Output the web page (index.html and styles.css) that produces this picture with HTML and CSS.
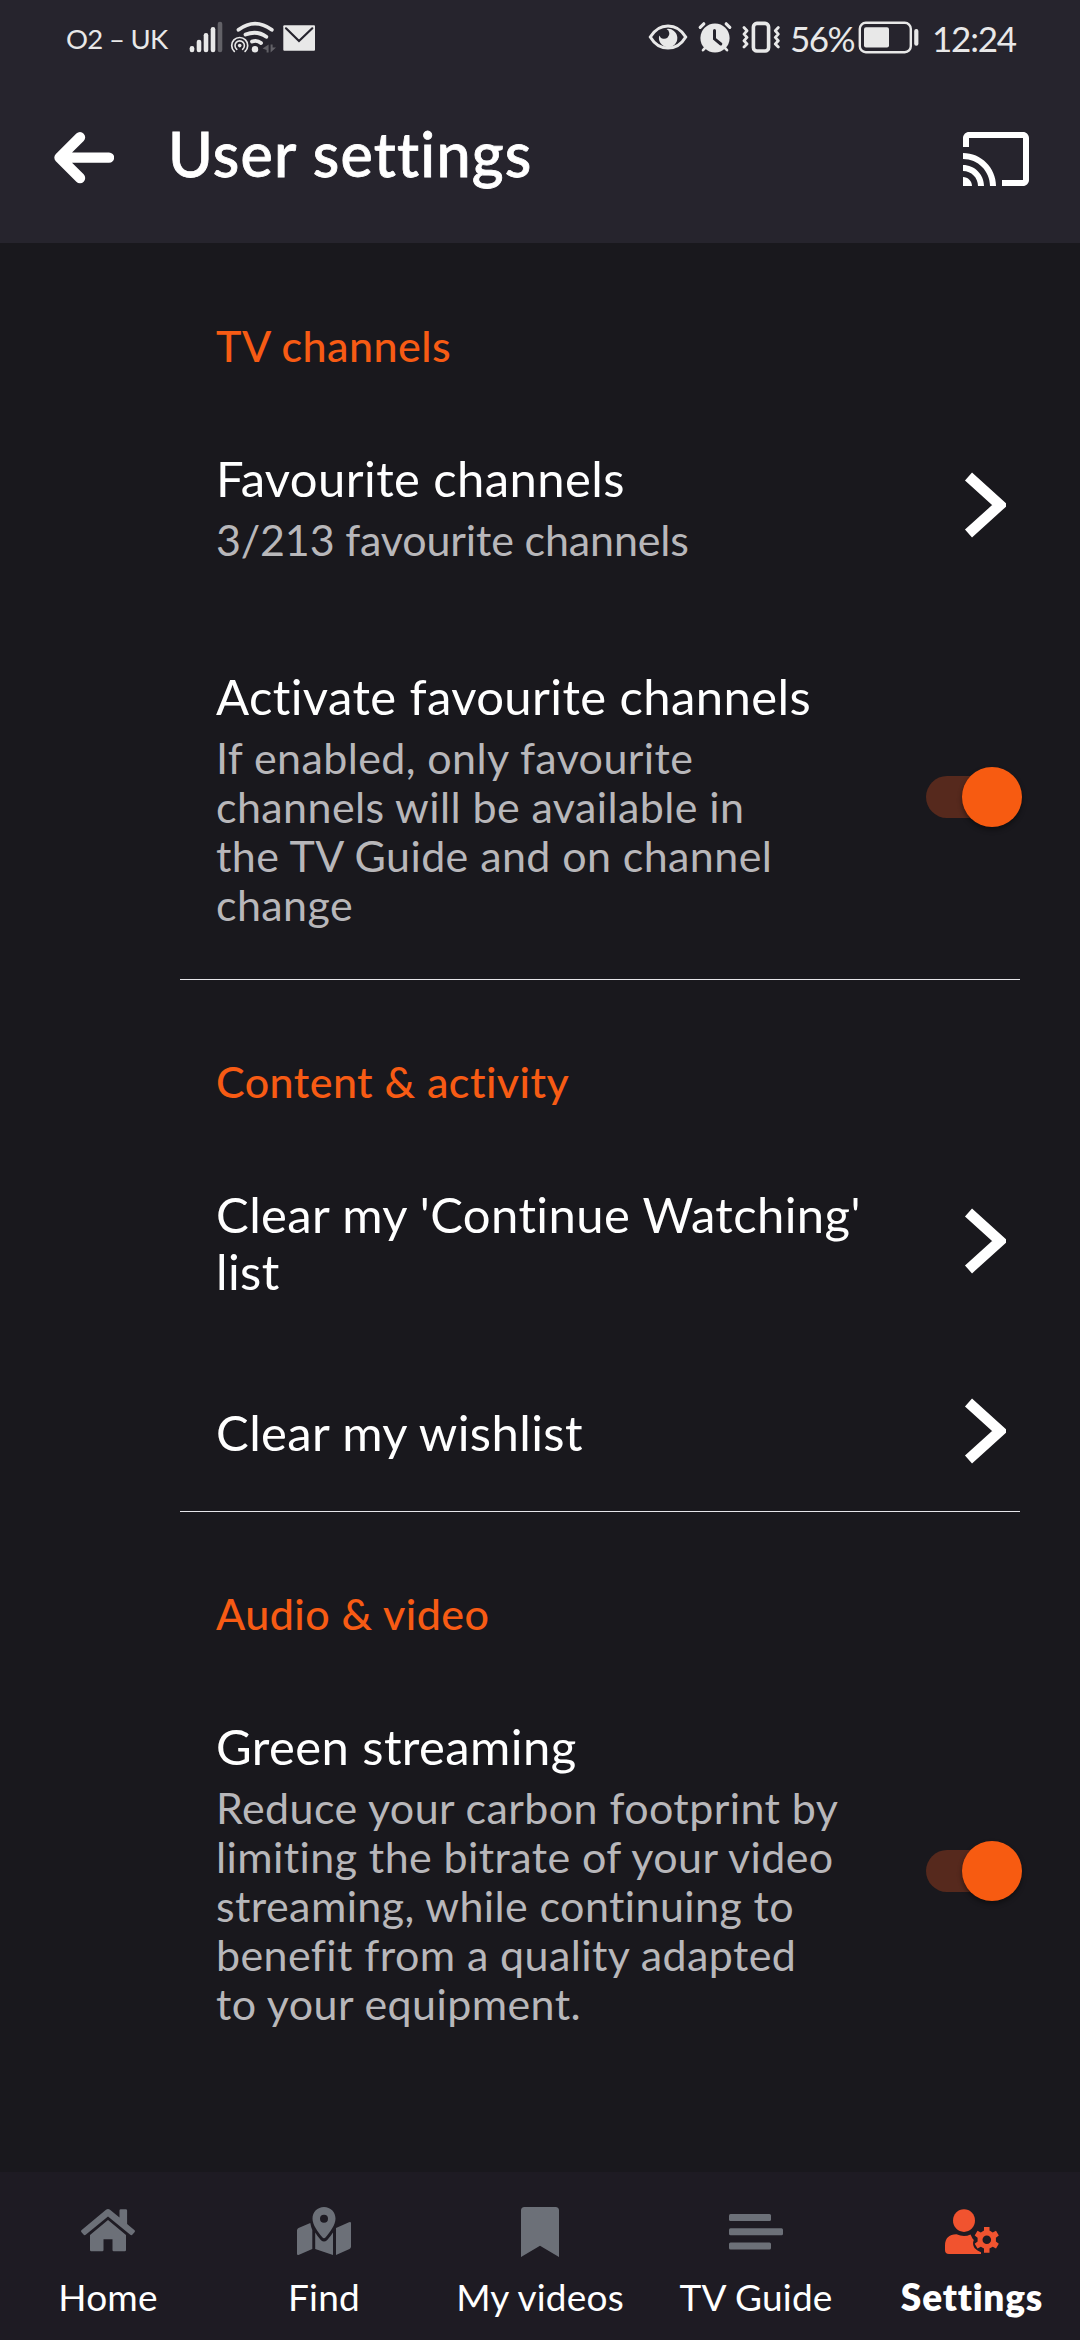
FILE: index.html
```
<!DOCTYPE html>
<html lang="en">
<head>
<meta charset="UTF-8">
<meta name="viewport" content="width=device-width, initial-scale=1.0">
<title>User settings</title>
<link rel="stylesheet" href="styles.css">
</head>
<body>

<header class="top">
    <div class="status">
        <span class="carrier">O2 – UK</span>
        <svg class="signal" viewBox="188 0 36 76" width="36" height="76" fill="#e8e8e8">
            <rect x="189.7" y="46" width="4.6" height="6.3" rx="2.2"/>
            <rect x="196.7" y="39.7" width="4.6" height="12.6" rx="2.2"/>
            <rect x="203.7" y="33" width="4.6" height="19.3" rx="2.2"/>
            <rect x="210.7" y="27" width="4.6" height="25.3" rx="2.2"/>
            <rect x="217.7" y="21.7" width="4.6" height="30.6" rx="2.2" fill="#626167"/>
        </svg>
        <svg viewBox="224 0 56 76" width="56" height="76" fill="none" stroke="#e8e8e8" stroke-linecap="round">
            <path d="M238.5 29.8Q255 17.5 271.8 29.8" stroke-width="3.8"/>
            <path d="M245.5 34.6Q257 30 266.3 36.8" stroke-width="3.8"/>
            <path d="M252 41.6Q257 39.6 261 43" stroke-width="3.8"/>
            <circle cx="255" cy="49.3" r="3.2" fill="#e8e8e8" stroke="none"/>
            <path d="M234.3 51.4A8 8 0 1 1 245.1 51.4" stroke-width="1.7"/>
            <path d="M236.8 49.3A4.7 4.7 0 1 1 242.6 49.3" stroke-width="1.6"/>
            <circle cx="239.7" cy="45.6" r="1.8" fill="#e8e8e8" stroke="none"/>
            <path d="M268.6 44.5v8h-2v-2.5l-4-1.5zM270.6 44.5v8l5.4-5h-3.4v-3z" fill="#626167" stroke="none"/>
        </svg>
        <svg viewBox="280 0 38 76" width="38" height="76">
            <rect x="283.3" y="25.3" width="31.7" height="25.4" rx="1" fill="#e8e8e8"/>
            <path d="M286 28.3L299 41L312.3 28.3" fill="none" stroke="#26242d" stroke-width="2.2" stroke-linecap="round"/>
        </svg>
        <svg class="status-right" viewBox="646 0 44 76" width="44" height="76">
            <path d="M650.3 37C659 22.2 677 22.2 685.7 37C677 51.8 659 51.8 650.3 37z" fill="none" stroke="#e8e8e8" stroke-width="3"/>
            <path d="M666.5 29A9.2 9.2 0 1 1 659.3 35.5A5.2 5.2 0 1 0 666.5 29z" fill="#e8e8e8"/>
        </svg>
        <svg viewBox="690 0 50 76" width="50" height="76" stroke="#e8e8e8" stroke-linecap="round" fill="none">
            <circle cx="715" cy="38" r="14.6" fill="#e8e8e8" stroke="none"/>
            <path d="M700.2 27.3L703.8 23.8M729.8 27.3L726.2 23.8" stroke-width="3.2"/>
            <path d="M703 50.2L706 47M727 50.2L724 47" stroke-width="2.6"/>
            <path d="M714.5 30.5v8.3l6.3 5.2" stroke="#26242d" stroke-width="3"/>
        </svg>
        <svg viewBox="740 0 50 76" width="50" height="76" stroke="#e8e8e8" stroke-linecap="round" stroke-linejoin="round" fill="none">
            <rect x="753.4" y="23.4" width="15.2" height="27.6" rx="3.5" stroke-width="3.6"/>
            <path d="M744 27.5l3 3.3-3 3.3 3 3.3-3 3.3 3 3.3-3 3M778.3 27.5l-3 3.3 3 3.3-3 3.3 3 3.3-3 3.3 3 3" stroke-width="2.8"/>
        </svg>
        <span class="percent">56%</span>
        <svg viewBox="856 0 76 76" width="76" height="76">
            <rect x="859.8" y="22.8" width="51" height="29.4" rx="6" fill="none" stroke="#e8e8e8" stroke-width="2.4"/>
            <rect x="864" y="27.3" width="25" height="20.2" rx="2" fill="#e8e8e8"/>
            <rect x="914.2" y="29" width="4.2" height="16.8" rx="2" fill="#e8e8e8"/>
        </svg>
        <span class="clock">12:24</span>
    </div>
    <div class="title-bar">
        <svg class="back" viewBox="54 131 60 56" width="60" height="56">
            <path d="M80 137.3L59.5 157.6L80 178M61 157.6H109" fill="none" stroke="#fff" stroke-width="10.4" stroke-linecap="round" stroke-linejoin="round"/>
        </svg>
        <h1>User settings</h1>
        <svg class="cast" viewBox="0 0 24 24" width="72" height="72" fill="#fff">
            <path d="M1 18v3h3c0-1.66-1.34-3-3-3zm0-4v2c2.76 0 5 2.24 5 5h2c0-3.87-3.13-7-7-7zm0-4v2c4.97 0 9 4.03 9 9h2c0-6.08-4.93-11-11-11zm20-7H3c-1.1 0-2 .9-2 2v3h2V5h18v14h-7v2h7c1.1 0 2-.9 2-2V5c0-1.1-.9-2-2-2z"/>
        </svg>
    </div>
</header>

<main>
    <section>
        <h2>TV channels</h2>
        <div class="row">
            <div class="text">
                <div class="name">Favourite channels</div>
                <div class="desc count">3/213 favourite channels</div>
            </div>
            <svg class="chevron" viewBox="0 0 42 66" width="42" height="66"><path d="M4.5 4.5L36 33L4.5 61.5"/></svg>
        </div>
        <div class="row">
            <div class="text">
                <div class="name">Activate favourite channels</div>
                <div class="desc">If enabled, only favourite<br>channels will be available in<br>the TV Guide and on channel<br>change</div>
            </div>
            <div class="toggle"><div class="thumb"></div></div>
        </div>
    </section>

    <section>
        <h2>Content &amp; activity</h2>
        <div class="row">
            <div class="text">
                <div class="name">Clear my 'Continue Watching'<br>list</div>
            </div>
            <svg class="chevron" viewBox="0 0 42 66" width="42" height="66"><path d="M4.5 4.5L36 33L4.5 61.5"/></svg>
        </div>
        <div class="row">
            <div class="text">
                <div class="name">Clear my wishlist</div>
            </div>
            <svg class="chevron" viewBox="0 0 42 66" width="42" height="66"><path d="M4.5 4.5L36 33L4.5 61.5"/></svg>
        </div>
    </section>

    <section>
        <h2>Audio &amp; video</h2>
        <div class="row">
            <div class="text">
                <div class="name">Green streaming</div>
                <div class="desc">Reduce your carbon footprint by<br>limiting the bitrate of your video<br>streaming, while continuing to<br>benefit from a quality adapted<br>to your equipment.</div>
            </div>
            <div class="toggle"><div class="thumb"></div></div>
        </div>
    </section>
</main>

<nav>
    <div class="tab">
        <svg viewBox="0 0 54 54" width="54" height="54">
            <path d="M25 5.7q2-1.4 4 0L38.5 13.500V6.500q0-1.300 1.300-1.300h5q1.300 0 1.300 1.300V20l7.200 6q1.200 1 .2 2.200l-2 2.400q-1 1.200-2.200.2L27 12.500 4.700 30.800q-1.200 1-2.200-.2l-2-2.400q-1-1.200.2-2.200z"/>
            <path d="M27 16L45 31V46q0 1.200-1.200 1.200H32.700q-1.200 0-1.200-1.200V35.300H22.500V46q0 1.200-1.200 1.200H10.200Q9 47.200 9 46V31z"/>
        </svg>
        <span>Home</span>
    </div>
    <div class="tab">
        <svg viewBox="0 0 54 54" width="54" height="54">
            <path fill-rule="evenodd" d="M27 3C20.500 3 15.500 8 15.500 14.500C15.500 21 21 28 25.300 33.300Q27 35.300 28.700 33.300C33 28 38.500 21 38.500 14.500C38.500 8 33.500 3 27 3zM27 10.800a4 4 0 1 1 0 8a4 4 0 1 1 0-8z"/>
            <path d="M13.300 19Q14 23 15.300 26V45L2 50.800Q0 51.500 0 49.700V26.500Q0 24.800 1.500 24zM39 24L52 18.300Q54 17.500 54 19.300V42.500Q54 44.300 52.500 45L39 51zM18.200 28.500Q20.500 32.500 24 36.200Q27 38.800 30 36.200Q33.500 32.500 36 28.500V51L18.200 45z"/>
        </svg>
        <span>Find</span>
    </div>
    <div class="tab">
        <svg viewBox="0 0 54 54" width="54" height="54">
            <path d="M8 53V6.500Q8 3 11.500 3H42.500Q46 3 46 6.500V53L27 41.800z"/>
        </svg>
        <span>My videos</span>
    </div>
    <div class="tab">
        <svg viewBox="0 0 54 54" width="54" height="54">
            <rect x="0" y="10" width="42" height="7" rx="1.500"/>
            <rect x="0" y="24.300" width="54" height="7" rx="1.500"/>
            <rect x="0" y="38.500" width="42" height="7" rx="1.500"/>
        </svg>
        <span>TV Guide</span>
    </div>
    <div class="tab active">
        <svg viewBox="0 0 54 54" width="54" height="54">
            <ellipse cx="19" cy="16.600" rx="11" ry="11.300"/>
            <path d="M0 46V41.500Q0 30.500 11.500 30.300Q19 33.600 25.500 30.500L27.500 34.500L28.800 36Q27 40 29.500 44L32.500 46.500L36 48.300V50H4Q0 50 0 46z"/>
            <path fill-rule="evenodd" d="M39 23h5.500v3.600l3.200 1.800 3.300-1.600 2.800 4.700-2.900 2.200v3.800l2.900 2.200-2.800 4.700-3.300-1.600-3.200 1.800v4.200H39v-4.200l-3.200-1.800-3.300 1.600-2.800-4.700 2.900-2.200v-3.800l-2.900-2.200 2.800-4.700 3.300 1.600 3.200-1.800zM41.800 31.500a4.300 4.300 0 1 0 0 8.600a4.300 4.300 0 1 0 0-8.600z"/>
        </svg>
        <span>Settings</span>
    </div>
</nav>

</body>
</html>
```
FILE: styles.css
```
* {
    box-sizing: border-box;
}
body {
    margin: 0;
    width: 1080px;
    height: 2340px;
    display: flex;
    flex-direction: column;
    background-color: #19181d;
    color: #fff;
    font-family: Lato, "Open Sans", sans-serif;
    font-variant-ligatures: none;
}
svg {
    display: block;
    flex: none;
}

.top {
    height: 243px;
    background-color: #26242d;
}
.status {
    display: flex;
    height: 76px;
    padding-left: 66px;
    color: #e8e8e8;
    line-height: 76px;
    white-space: nowrap;
}
.carrier {
    width: 122px;
    font-size: 27.5px;
    letter-spacing: -0.7px;
    line-height: 78px;
}
.status-right {
    margin-left: 328px;
}
.percent {
    width: 66px;
    font-size: 35px;
    letter-spacing: -1.5px;
}
.clock {
    font-size: 35px;
    letter-spacing: -1.2px;
}
.title-bar {
    display: flex;
    align-items: center;
    height: 166px;
    padding: 0 48px 0 54px;
}
h1 {
    flex: 1;
    margin: 0;
    padding-left: 54px;
    padding-bottom: 11px;
    font-size: 61px;
    font-weight: 500;
    letter-spacing: 1.2px;
    line-height: 76px;
    -webkit-text-stroke: 0.8px #fff;
}

main {
    flex: 1;
    padding-top: 1px;
}
section {
    margin-left: 180px;
    margin-right: 60px;
    padding-left: 36px;
    border-bottom: 1px solid #e6e6ea;
}
section:last-child {
    border-bottom: none;
}
h2 {
    height: 152px;
    margin: 0;
    padding-top: 77px;
    color: #f75b14;
    font-size: 43px;
    font-weight: 500;
    letter-spacing: 0.45px;
    line-height: 49px;
}
.row {
    display: flex;
    align-items: center;
    justify-content: space-between;
    padding: 46px 0;
}
.text {
    padding: 8px 0 4px;
    white-space: nowrap;
}
.name {
    font-size: 49px;
    letter-spacing: 0.4px;
    line-height: 57px;
}
.desc {
    margin-top: 8px;
    color: #b8b7ba;
    font-size: 43px;
    letter-spacing: 0.4px;
    line-height: 49px;
}
.count {
    letter-spacing: -0.15px;
}
.chevron {
    margin-right: 14px;
}
.chevron path {
    fill: none;
    stroke: #fff;
    stroke-width: 10.5;
}
.toggle {
    display: flex;
    align-items: center;
    justify-content: flex-end;
    width: 94px;
    height: 42px;
    border-radius: 21px;
    background-color: #56291d;
}
.thumb {
    flex: none;
    width: 60px;
    height: 60px;
    margin-right: -2px;
    border-radius: 50%;
    background-color: #f75b11;
    box-shadow: 0 3px 5px rgba(0, 0, 0, 0.4);
}

nav {
    display: grid;
    grid-template-columns: repeat(5, 1fr);
    height: 168px;
    background-color: #1e1b23;
}
.tab {
    display: flex;
    flex-direction: column;
    align-items: center;
    padding-top: 32px;
    fill: #6c7078;
    font-size: 37px;
    letter-spacing: 0.2px;
    line-height: 44px;
}
.tab span {
    margin-top: 17px;
}
.active {
    fill: #f1532f;
    font-weight: 800;
    letter-spacing: 0.8px;
}
```
